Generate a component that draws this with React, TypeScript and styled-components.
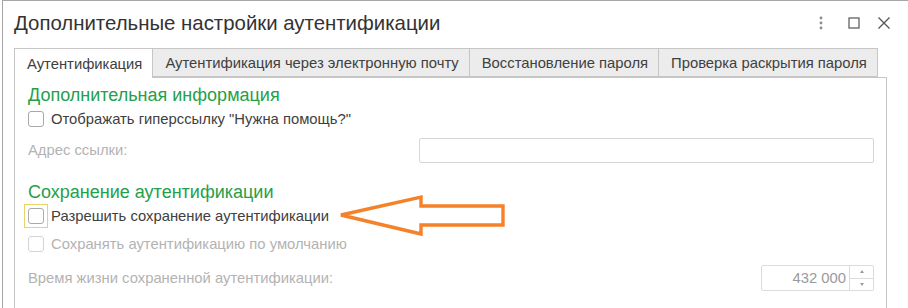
import React from 'react';
import styled, { createGlobalStyle } from 'styled-components';

const Global = createGlobalStyle`
  html, body { margin: 0; padding: 0; background: #ffffff; }
  body { font-family: "Liberation Sans", Arial, sans-serif; }
`;

const Window = styled.div`
  position: relative;
  margin-left: 2px;
  width: 906px;
  height: 308px;
  box-sizing: border-box;
  border-top: 1px solid #a6a6a6;
  border-left: 1px solid #a6a6a6;
  background: #ffffff;
  overflow: hidden;
`;

const TitleBar = styled.div`
  display: flex;
  align-items: center;
  height: 47px;
  padding-left: 11px;
  box-sizing: border-box;
`;

const Title = styled.div`
  flex: 1;
  font-size: 20.4px;
  color: #333333;
  padding-bottom: 3px;
`;

const TitleButtons = styled.div`
  display: flex;
  align-items: center;
  margin-right: 9px;
  padding-bottom: 3px;
`;

const IconButton = styled.div<{ $w: number; $ml?: number }>`
  width: ${(p) => p.$w}px;
  height: 20px;
  margin-left: ${(p) => p.$ml ?? 0}px;
  display: flex;
  align-items: center;
  justify-content: center;
`;

const TabRow = styled.div`
  display: flex;
  margin-left: 11px;
  height: 29px;
`;

const Tab = styled.div<{ $active?: boolean }>`
  position: relative;
  z-index: 1;
  box-sizing: border-box;
  height: ${(p) => (p.$active ? 30 : 29)}px;
  padding: 1px 10px 0 12px;
  display: flex;
  align-items: center;
  font-size: 14.8px;
  color: #404040;
  background: ${(p) => (p.$active ? '#ffffff' : '#ececec')};
  border: 1px solid #c6c6c6;
  border-bottom: ${(p) => (p.$active ? 'none' : '1px solid #c6c6c6')};
  margin-left: -1px;
  &:first-child { margin-left: 0; }
`;

const Panel = styled.div`
  margin-left: 11px;
  width: 873px;
  height: 240px;
  box-sizing: border-box;
  border: 1px solid #c6c6c6;
  padding: 7px 12px 0 13px;
  display: flex;
  flex-direction: column;
`;

const SectionHeader = styled.div<{ $mt?: number }>`
  font-size: 18px;
  line-height: 20px;
  color: #24a04a;
  margin-top: ${(p) => p.$mt ?? 0}px;
`;

const CheckRow = styled.div`
  display: flex;
  align-items: center;
  height: 28px;
  gap: 7px;
`;

const CheckFocus = styled.div<{ $focus?: boolean }>`
  width: 16px;
  height: 16px;
  display: flex;
  align-items: center;
  justify-content: center;
  outline: ${(p) => (p.$focus ? '1px solid #e8d36a' : 'none')};
  outline-offset: 3px;
`;

const CheckBox = styled.div<{ $disabled?: boolean }>`
  width: 16px;
  height: 16px;
  box-sizing: border-box;
  border: 1px solid ${(p) => (p.$disabled ? '#d4d4d4' : '#a8a8a8')};
  border-radius: 3px;
  background: #ffffff;
`;

const Label = styled.span<{ $disabled?: boolean }>`
  font-size: 14.8px;
  color: ${(p) => (p.$disabled ? '#b3b3b3' : '#404040')};
`;

const FieldRow = styled.div<{ $mt?: number }>`
  display: flex;
  align-items: center;
  justify-content: space-between;
  height: 26px;
  margin-top: ${(p) => p.$mt ?? 0}px;
`;

const TextInput = styled.div`
  width: 455px;
  height: 25px;
  box-sizing: border-box;
  border: 1px solid #d6d6d6;
  border-radius: 2px;
  background: #ffffff;
`;

const Spin = styled.div`
  width: 113px;
  height: 26px;
  box-sizing: border-box;
  border: 1px solid #dcdcdc;
  border-radius: 2px;
  display: flex;
`;

const SpinValue = styled.div`
  flex: 1;
  display: flex;
  align-items: center;
  justify-content: flex-end;
  padding-right: 3px;
  font-size: 14.8px;
  color: #9a9a9a;
`;

const SpinButtons = styled.div`
  width: 23px;
  border-left: 1px solid #dcdcdc;
  display: flex;
  flex-direction: column;
`;

const SpinButton = styled.div<{ $top?: boolean }>`
  flex: 1;
  display: flex;
  align-items: center;
  justify-content: center;
  border-bottom: ${(p) => (p.$top ? '1px solid #dcdcdc' : 'none')};
`;

const Arrow = styled.svg`
  position: absolute;
  left: 0;
  top: 0;
  pointer-events: none;
`;

export default function App() {
  return (
    <>
      <Global />
      <Window>
        <TitleBar>
          <Title>Дополнительные настройки аутентификации</Title>
          <TitleButtons>
            <IconButton $w={18}>
              <svg width="4" height="14" viewBox="0 0 4 14">
                <circle cx="2" cy="2" r="1.4" fill="#8a8a8a" />
                <circle cx="2" cy="7" r="1.4" fill="#8a8a8a" />
                <circle cx="2" cy="12" r="1.4" fill="#8a8a8a" />
              </svg>
            </IconButton>
            <IconButton $w={30} $ml={9}>
              <svg width="12" height="12" viewBox="0 0 12 12">
                <rect x="1" y="1" width="10" height="10" fill="none" stroke="#555" strokeWidth="1.2" />
              </svg>
            </IconButton>
            <IconButton $w={30}>
              <svg width="14" height="14" viewBox="0 0 14 14">
                <path d="M1.5 1.5 L12.5 12.5 M12.5 1.5 L1.5 12.5" stroke="#555" strokeWidth="1.3" />
              </svg>
            </IconButton>
          </TitleButtons>
        </TitleBar>
        <TabRow>
          <Tab $active>Аутентификация</Tab>
          <Tab>Аутентификация через электронную почту</Tab>
          <Tab>Восстановление пароля</Tab>
          <Tab>Проверка раскрытия пароля</Tab>
        </TabRow>
        <Panel>
          <SectionHeader>Дополнительная информация</SectionHeader>
          <CheckRow>
            <CheckFocus>
              <CheckBox />
            </CheckFocus>
            <Label>Отображать гиперссылку "Нужна помощь?"</Label>
          </CheckRow>
          <FieldRow $mt={4}>
            <Label $disabled>Адрес ссылки:</Label>
            <TextInput />
          </FieldRow>
          <SectionHeader $mt={19}>Сохранение аутентификации</SectionHeader>
          <CheckRow>
            <CheckFocus $focus>
              <CheckBox />
            </CheckFocus>
            <Label>Разрешить сохранение аутентификации</Label>
          </CheckRow>
          <CheckRow>
            <CheckFocus>
              <CheckBox $disabled />
            </CheckFocus>
            <Label $disabled>Сохранять аутентификацию по умолчанию</Label>
          </CheckRow>
          <FieldRow $mt={7}>
            <Label $disabled>Время жизни сохраненной аутентификации:</Label>
            <Spin>
              <SpinValue>432 000</SpinValue>
              <SpinButtons>
                <SpinButton $top>
                  <svg width="4" height="3" viewBox="0 0 4 3">
                    <path d="M0 3 L2 0 L4 3 Z" fill="#9a9a9a" />
                  </svg>
                </SpinButton>
                <SpinButton>
                  <svg width="4" height="3" viewBox="0 0 4 3">
                    <path d="M0 0 L2 3 L4 0 Z" fill="#9a9a9a" />
                  </svg>
                </SpinButton>
              </SpinButtons>
            </Spin>
          </FieldRow>
        </Panel>
        <Arrow width="906" height="308" viewBox="0 0 906 308">
          <path
            d="M338 214 L418 196 L418 205 L500 205 L500 224 L418 224 L418 233 Z"
            fill="none"
            stroke="#f5812a"
            strokeWidth="3.4"
            strokeLinejoin="miter"
          />
        </Arrow>
      </Window>
    </>
  );
}
